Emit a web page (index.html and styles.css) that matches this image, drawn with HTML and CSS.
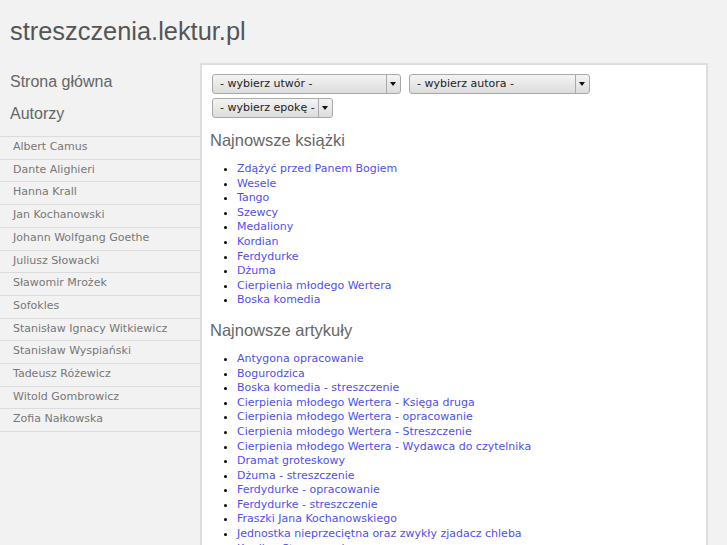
FILE: index.html
```html
<!DOCTYPE html>
<html lang="pl">
<head>
    <meta charset="UTF-8">
    <title>streszczenia.lektur.pl</title>
    <link rel="stylesheet" href="styles.css">
</head>
<body>
    <div class="header">
        <div class="logo">streszczenia.lektur.pl</div>
    </div>

    <div class="page">
        <div class="sidebar">
            <a class="side-link" href="#">Strona główna</a>
            <a class="side-link" href="#">Autorzy</a>
            <ul class="authors">
                <li>Albert Camus</li>
                <li>Dante Alighieri</li>
                <li>Hanna Krall</li>
                <li>Jan Kochanowski</li>
                <li>Johann Wolfgang Goethe</li>
                <li>Juliusz Słowacki</li>
                <li>Sławomir Mrożek</li>
                <li>Sofokles</li>
                <li>Stanisław Ignacy Witkiewicz</li>
                <li>Stanisław Wyspiański</li>
                <li>Tadeusz Różewicz</li>
                <li>Witold Gombrowicz</li>
                <li>Zofia Nałkowska</li>
            </ul>
        </div>

        <div class="content">
            <div class="filters">
                <div class="picker w-work"><span class="picker-label">- wybierz utwór -</span><span class="picker-arrow"></span></div>
                <div class="picker w-author"><span class="picker-label">- wybierz autora -</span><span class="picker-arrow"></span></div>
                <div class="picker w-epoch"><span class="picker-label">- wybierz epokę -</span><span class="picker-arrow"></span></div>
            </div>

            <h2 class="section-title">Najnowsze książki</h2>
            <ul class="links">
                <li><a href="#">Zdążyć przed Panem Bogiem</a></li>
                <li><a href="#">Wesele</a></li>
                <li><a href="#">Tango</a></li>
                <li><a href="#">Szewcy</a></li>
                <li><a href="#">Medaliony</a></li>
                <li><a href="#">Kordian</a></li>
                <li><a href="#">Ferdydurke</a></li>
                <li><a href="#">Dżuma</a></li>
                <li><a href="#">Cierpienia młodego Wertera</a></li>
                <li><a href="#">Boska komedia</a></li>
            </ul>

            <h2 class="section-title">Najnowsze artykuły</h2>
            <ul class="links">
                <li><a href="#">Antygona opracowanie</a></li>
                <li><a href="#">Bogurodzica</a></li>
                <li><a href="#">Boska komedia - streszczenie</a></li>
                <li><a href="#">Cierpienia młodego Wertera - Księga druga</a></li>
                <li><a href="#">Cierpienia młodego Wertera - opracowanie</a></li>
                <li><a href="#">Cierpienia młodego Wertera - Streszczenie</a></li>
                <li><a href="#">Cierpienia młodego Wertera - Wydawca do czytelnika</a></li>
                <li><a href="#">Dramat groteskowy</a></li>
                <li><a href="#">Dżuma - streszczenie</a></li>
                <li><a href="#">Ferdydurke - opracowanie</a></li>
                <li><a href="#">Ferdydurke - streszczenie</a></li>
                <li><a href="#">Fraszki Jana Kochanowskiego</a></li>
                <li><a href="#">Jednostka nieprzeciętna oraz zwykły zjadacz chleba</a></li>
                <li><a href="#">Kordian Streszczenie</a></li>
                <li><a href="#">Medaliony - streszczenie</a></li>
                <li><a href="#">Szewcy - opracowanie</a></li>
            </ul>
        </div>
    </div>
</body>
</html>
```

FILE: styles.css
```css
body {
    margin: 0;
    background: #f2f2f2;
    font-family: "DejaVu Sans", sans-serif;
    color: #666;
}

.header {
    padding: 17px 10px;
}

.logo {
    font-family: "Liberation Sans", Arial, sans-serif;
    font-size: 25.4px;
    line-height: 29px;
    color: #555;
}

.page {
    display: flex;
    width: 708px;
}

/* lewa kolumna */
.sidebar {
    width: 200px;
    flex-shrink: 0;
    padding-top: 3px;
}

.side-link {
    display: block;
    padding: 7px 10px;
    font-family: "Liberation Sans", Arial, sans-serif;
    font-size: 16px;
    line-height: 18px;
    color: #666;
    text-decoration: none;
}

.authors {
    list-style: none;
    margin: 6px 0 0;
    padding: 0;
    border-bottom: 1px solid #dcdcdc;
}

.authors li {
    padding: 3px 0 4px 13px;
    border-top: 1px solid #dcdcdc;
    font-size: 11px;
    line-height: 14.7px;
    color: #777;
}

/* treść */
.content {
    flex: 1;
    background: #fff;
    border: 2px solid #dedede;
    border-bottom: none;
    padding: 9px 10px 0 8px;
    min-height: 600px;
}

.filters {
    display: flex;
    flex-wrap: wrap;
    gap: 4px 8px;
    padding-left: 2px;
}

.picker {
    display: flex;
    height: 18px;
    border: 1px solid #a9a9a9;
    border-radius: 3px;
    background: linear-gradient(#f4f4f4, #dcdcdc);
    font-size: 11px;
    line-height: 18px;
    color: #222;
}

.w-work { width: 187px; }
.w-author { width: 179px; }
.w-epoch { width: 119px; }

.picker-label {
    flex: 1;
    padding-left: 7px;
}

.picker-arrow {
    width: 13px;
    border-left: 1px solid #a9a9a9;
    position: relative;
}

.picker-arrow::after {
    content: "";
    position: absolute;
    left: 3px;
    top: 7px;
    border-left: 3.5px solid transparent;
    border-right: 3.5px solid transparent;
    border-top: 4px solid #111;
}

.section-title {
    margin: 13px 0 12px;
    font-family: "Liberation Sans", Arial, sans-serif;
    font-size: 16.5px;
    line-height: 19px;
    font-weight: normal;
    color: #666;
}

.links {
    margin: 0;
    padding-left: 27px;
    font-size: 11px;
    line-height: 14.6px;
    color: #000;
}

.links a {
    color: #4f4fef;
    text-decoration: none;
}
```
